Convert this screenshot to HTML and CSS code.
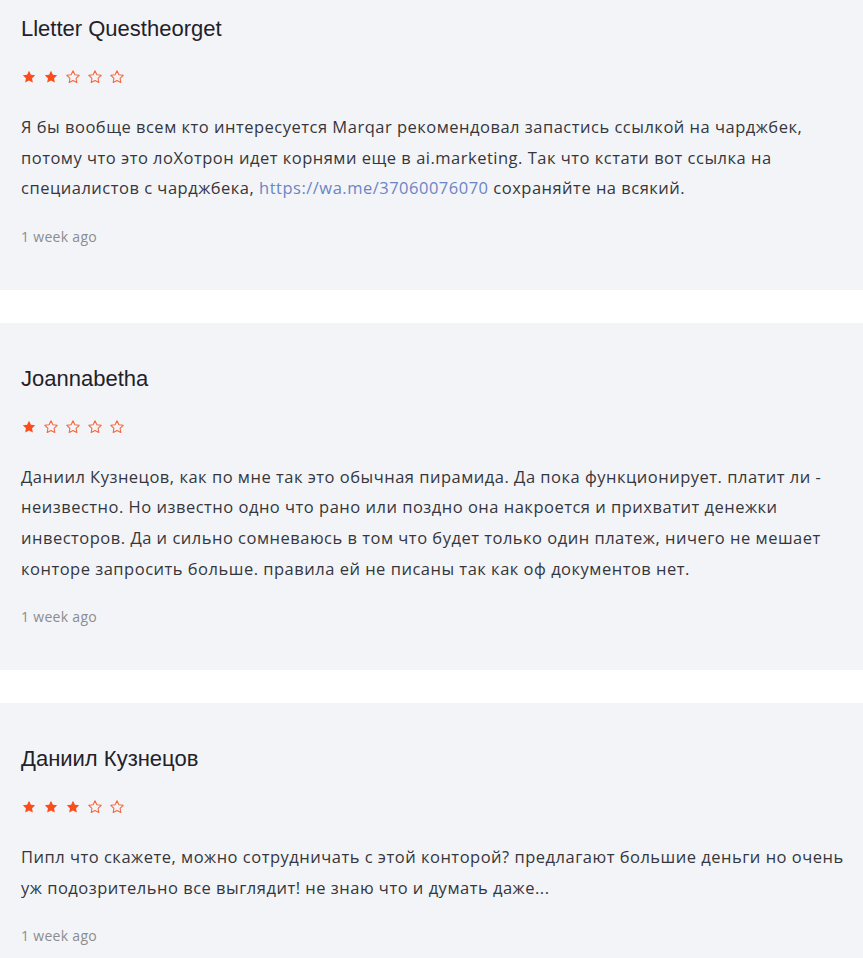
FILE: index.html
```html
<!DOCTYPE html>
<html lang="ru">
<head>
<meta charset="utf-8">
<title>Reviews</title>
<link rel="stylesheet" href="styles.css">
</head>
<body>
<svg width="0" height="0" class="defs">
  <defs>
    <path id="star" d="M12 2.6l2.85 5.9 6.45.9-4.7 4.5 1.15 6.4L12 17.2l-5.75 3.1 1.15-6.4-4.7-4.5 6.45-.9z"/>
  </defs>
</svg>
<main class="reviews">
  <article class="review">
    <h3 class="name">Lletter Questheorget</h3>
    <div class="stars">
      <svg class="star full" viewBox="0 0 24 24"><use href="#star"/></svg>
      <svg class="star full" viewBox="0 0 24 24"><use href="#star"/></svg>
      <svg class="star empty" viewBox="0 0 24 24"><use href="#star"/></svg>
      <svg class="star empty" viewBox="0 0 24 24"><use href="#star"/></svg>
      <svg class="star empty" viewBox="0 0 24 24"><use href="#star"/></svg>
    </div>
    <p class="text">Я бы вообще всем кто интересуется Marqar рекомендовал запастись ссылкой на чарджбек,<br>потому что это лоХотрон идет корнями еще в ai.marketing. Так что кстати вот ссылка на<br>специалистов с чарджбека, <a class="link" href="#">https://wa.me/37060076070</a> сохраняйте на всякий.</p>
    <div class="time">1 week ago</div>
  </article>
  <article class="review">
    <h3 class="name">Joannabetha</h3>
    <div class="stars">
      <svg class="star full" viewBox="0 0 24 24"><use href="#star"/></svg>
      <svg class="star empty" viewBox="0 0 24 24"><use href="#star"/></svg>
      <svg class="star empty" viewBox="0 0 24 24"><use href="#star"/></svg>
      <svg class="star empty" viewBox="0 0 24 24"><use href="#star"/></svg>
      <svg class="star empty" viewBox="0 0 24 24"><use href="#star"/></svg>
    </div>
    <p class="text">Даниил Кузнецов, как по мне так это обычная пирамида. Да пока функционирует. платит ли -<br>неизвестно. Но известно одно что рано или поздно она накроется и прихватит денежки<br>инвесторов. Да и сильно сомневаюсь в том что будет только один платеж, ничего не мешает<br>конторе запросить больше. правила ей не писаны так как оф документов нет.</p>
    <div class="time">1 week ago</div>
  </article>
  <article class="review">
    <h3 class="name">Даниил Кузнецов</h3>
    <div class="stars">
      <svg class="star full" viewBox="0 0 24 24"><use href="#star"/></svg>
      <svg class="star full" viewBox="0 0 24 24"><use href="#star"/></svg>
      <svg class="star full" viewBox="0 0 24 24"><use href="#star"/></svg>
      <svg class="star empty" viewBox="0 0 24 24"><use href="#star"/></svg>
      <svg class="star empty" viewBox="0 0 24 24"><use href="#star"/></svg>
    </div>
    <p class="text">Пипл что скажете, можно сотрудничать с этой конторой? предлагают большие деньги но очень<br>уж подозрительно все выглядит! не знаю что и думать даже...</p>
    <div class="time">1 week ago</div>
  </article>
</main>
</body>
</html>
```
FILE: styles.css
```css
html, body {
  margin: 0;
  padding: 0;
  background: #ffffff;
}
body {
  font-family: "Open Sans", "Noto Sans", sans-serif;
  overflow: hidden;
}
.defs {
  position: absolute;
  width: 0;
  height: 0;
}
.reviews {
  display: flex;
  flex-direction: column;
  gap: 33px;
  margin-top: -27px;
}
.review {
  background: #f3f4f8;
  padding: 43px 8px 43px 21px;
  display: flex;
  flex-direction: column;
}
.name {
  margin: 0;
  font-family: "Liberation Sans", Arial, sans-serif;
  font-weight: normal;
  font-size: 22px;
  line-height: 26px;
  color: #1f2229;
}
.stars {
  display: flex;
  gap: 6px;
  height: 20px;
  align-items: center;
  margin-top: 25px;
}
.star {
  width: 16px;
  height: 16px;
}
.star.full use {
  fill: #fb4d1c;
}
.star.empty use {
  fill: none;
  stroke: #f3673f;
  stroke-width: 1.6;
  stroke-linejoin: round;
}
.text {
  margin: 25px 0 0;
  font-size: 16.5px;
  line-height: 30.6px;
  color: #35373c;
  letter-spacing: 0.5px;
  white-space: nowrap;
}
.link {
  color: #6a85c4;
  text-decoration: none;
}
.time {
  margin-top: 23px;
  font-size: 14px;
  line-height: 20px;
  color: #8a8c91;
  letter-spacing: 0.3px;
}
```
